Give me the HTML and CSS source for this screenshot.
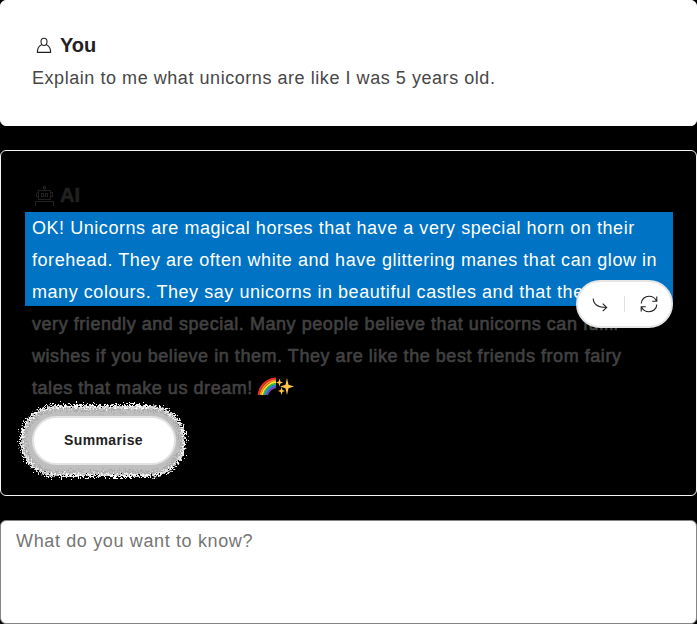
FILE: index.html
```
<!DOCTYPE html>
<html lang="en">
<head>
<meta charset="utf-8">
<title>Chat</title>
<link rel="stylesheet" href="styles.css">
</head>
<body>
<main class="chat">
  <section class="card user">
    <h2 class="author">
      <svg class="icon" width="24" height="24" viewBox="0 0 24 24"><path d="M12 5.300c-2 0-3 1.400-3 3.300 0 2.200 1.300 3.900 3 3.900s3-1.700 3-3.900c0-1.900-1-3.300-3-3.300zM9.600 11.700c-2.600 1-4.200 3.300-4.200 7.700h13.200c0-4.400-1.600-6.700-4.200-7.700"/></svg>
      <span>You</span>
    </h2>
    <p class="message">Explain to me what unicorns are like I was 5 years old.</p>
  </section>
  <section class="card ai">
    <h2 class="author">
      <svg class="icon robot" width="24" height="24" viewBox="0 0 24 24" shape-rendering="crispEdges"><path d="M7.500 7.500h12v9h-12zM13.500 7V4.500M5.500 9.500v4M21.500 9.500v4M5.500 9.500h2M5.500 13.500h2M19.500 9.500h2M19.500 13.500h2M4.500 22.500v-4h18v4M10.500 10.500h2v3h-2zM14.500 10.500h2v3h-2zM12 12.500h3"/><path d="M12.500 3.500h2v2h-2z"/></svg>
      <span>AI</span>
    </h2>
    <div class="answer">
      <div class="selected">
        <p class="message">OK! Unicorns are magical horses that have a very special horn on their<br>forehead. They are often white and have glittering manes that can glow in<br>many colours. They say unicorns in beautiful castles and that they are</p>
      </div>
      <p class="message dim">very friendly and special. Many people believe that unicorns can fulfil<br>wishes if you believe in them. They are like the best friends from fairy<br>tales that make us dream! <span class="emoji"><svg width="37" height="19" viewBox="0 0 37 19"><g fill="none" stroke-width="2"><path stroke="#f22b2b" d="M1.500 18C3 9 9 2 19 1.500"/><path stroke="#ff8a1c" d="M3.500 18C5 10 10.500 4 19 3.300"/><path stroke="#ffe337" d="M5.200 18C6.500 11.500 12 6 19 5"/><path stroke="#38b93b" d="M6.800 18C8.500 12 13 7.500 19 6.700"/><path stroke="#238ce0" d="M8.300 18C10 13 14 9.300 19 8.400"/><path stroke="#7741b5" d="M10 18C11.500 14 15 11 19 10"/></g><path fill="#ffc34d" d="M30 1l1.500 6.700L37 9.500l-5.500 1.800L30 18l-1.500-6.700L23 9.500l5.500-1.800zM22.500 1.500l.9 3 2.600 1-2.600 1-.9 3-.9-3-2.600-1 2.600-1zM24.500 10l.9 3 2.600 1-2.600 1-.9 3-.9-3-2.600-1 2.600-1z"/></svg></span></p>
      <div class="toolbar">
        <svg class="tool" width="24" height="24" viewBox="0 0 24 24"><path d="M4.200 6.500C4.500 12 8.200 15.500 17.700 15.500M13.700 11.700l4 3.800-4 3.600"/></svg>
        <span class="divider"></span>
        <svg class="tool" width="24" height="24" viewBox="0 0 24 24"><path d="M5.200 11.500C5.400 7 9 4.300 13 4.300c3.500 0 6 1.800 7.400 4.500M20.800 4.500v4.700h-4.600M20.800 12.500c-.2 4.500-3.800 7.200-7.800 7.200-3.500 0-6-1.800-7.400-4.500M5.200 19.500v-4.700h4.600"/></svg>
      </div>
    </div>
    <div class="action">
      <svg class="halo" width="180" height="86" viewBox="0 0 180 86">
        <defs>
          <filter id="grain" x="0" y="0" width="180" height="86" filterUnits="userSpaceOnUse" color-interpolation-filters="sRGB">
            <feTurbulence type="fractalNoise" baseFrequency=".6" numOctaves="2" seed="4" result="noise"/>
            <feDisplacementMap in="SourceGraphic" in2="noise" scale="13" xChannelSelector="R" yChannelSelector="G"/>
          </filter>
        </defs>
        <g filter="url(#grain)">
          <rect x="7" y="7" width="166" height="72" rx="36" fill="#fff"/>
          <rect x="8.500" y="8.500" width="163" height="69" rx="34" fill="#ddd"/>
          <rect x="10.500" y="10.500" width="159" height="65" rx="32" fill="#aaa"/>
          <rect x="13" y="13" width="154" height="60" rx="30" fill="#bfbfbf"/>
        </g>
      </svg>
      <button class="summary" type="button">Summarise</button>
    </div>
  </section>
  <textarea class="prompt" placeholder="What do you want to know?"></textarea>
</main>
</body>
</html>
```
FILE: styles.css
```
* { box-sizing: border-box; }
body {
  margin: 0;
  background: #000;
  font-family: "Liberation Sans", Arial, sans-serif;
  overflow: hidden;
}
.chat { display: flex; flex-direction: column; gap: 24px; height: 624px; }
.card { border: 1px solid #fff; border-radius: 6px; padding: 29px 31px; }
.user { height: 126px; background: #fff; }
.ai { height: 346px; border-color: #f3f3f3; }
.author {
  display: flex;
  align-items: center;
  gap: 4px;
  height: 32px;
  margin: 0;
  padding-bottom: 2px;
  color: #212121;
  font-size: 20px;
  line-height: 30px;
}
.icon, .tool { fill: none; stroke: #212121; stroke-width: 1.1; flex: none; }
.icon.robot { stroke-width: 1; margin-left: -1px; margin-right: 1px; }
.ai .author span { -webkit-text-stroke: .6px #212121; }
.message {
  margin: 0;
  font-size: 18px;
  line-height: 32px;
  letter-spacing: .55px;
  color: #474747;
  white-space: nowrap;
}
.answer { position: relative; }
.selected {
  height: 94px;
  margin: 0 -8px 2px -7px;
  padding-left: 7px;
  background: #0073c4;
}
.selected .message { color: #fff; }
.dim { color: #424242; -webkit-text-stroke: .6px #424242; }
.emoji { margin-left: -1px; }
.emoji svg { vertical-align: -2px; }
.toolbar {
  position: absolute;
  top: 68px;
  right: -8px;
  width: 97px;
  height: 48px;
  display: flex;
  align-items: center;
  justify-content: space-between;
  padding: 0 11px;
  border: 2px solid #e5e5e5;
  border-radius: 24px;
  background: #fff;
}
.divider { width: 1px; height: 16px; background: #e0e0e0; }
.action { position: relative; width: 144px; margin-top: 12px; }
.halo { position: absolute; left: -19px; top: -18px; }
.summary {
  position: relative;
  display: block;
  width: 144px;
  height: 49px;
  padding: 0 1px 2px 0;
  border: 2px solid #e2e2e2;
  border-radius: 25px;
  background: #fff;
  color: #212121;
  font: bold 14px "Liberation Sans", Arial, sans-serif;
  letter-spacing: .4px;
}
.prompt {
  display: block;
  width: 100%;
  height: 104px;
  padding: 4px 15px;
  border: 1px solid #858585;
  border-radius: 6px;
  background: #fff;
  font: 18px/32px "Liberation Sans", Arial, sans-serif;
  letter-spacing: .64px;
  resize: none;
}
.prompt::placeholder { color: #757575; }
```
